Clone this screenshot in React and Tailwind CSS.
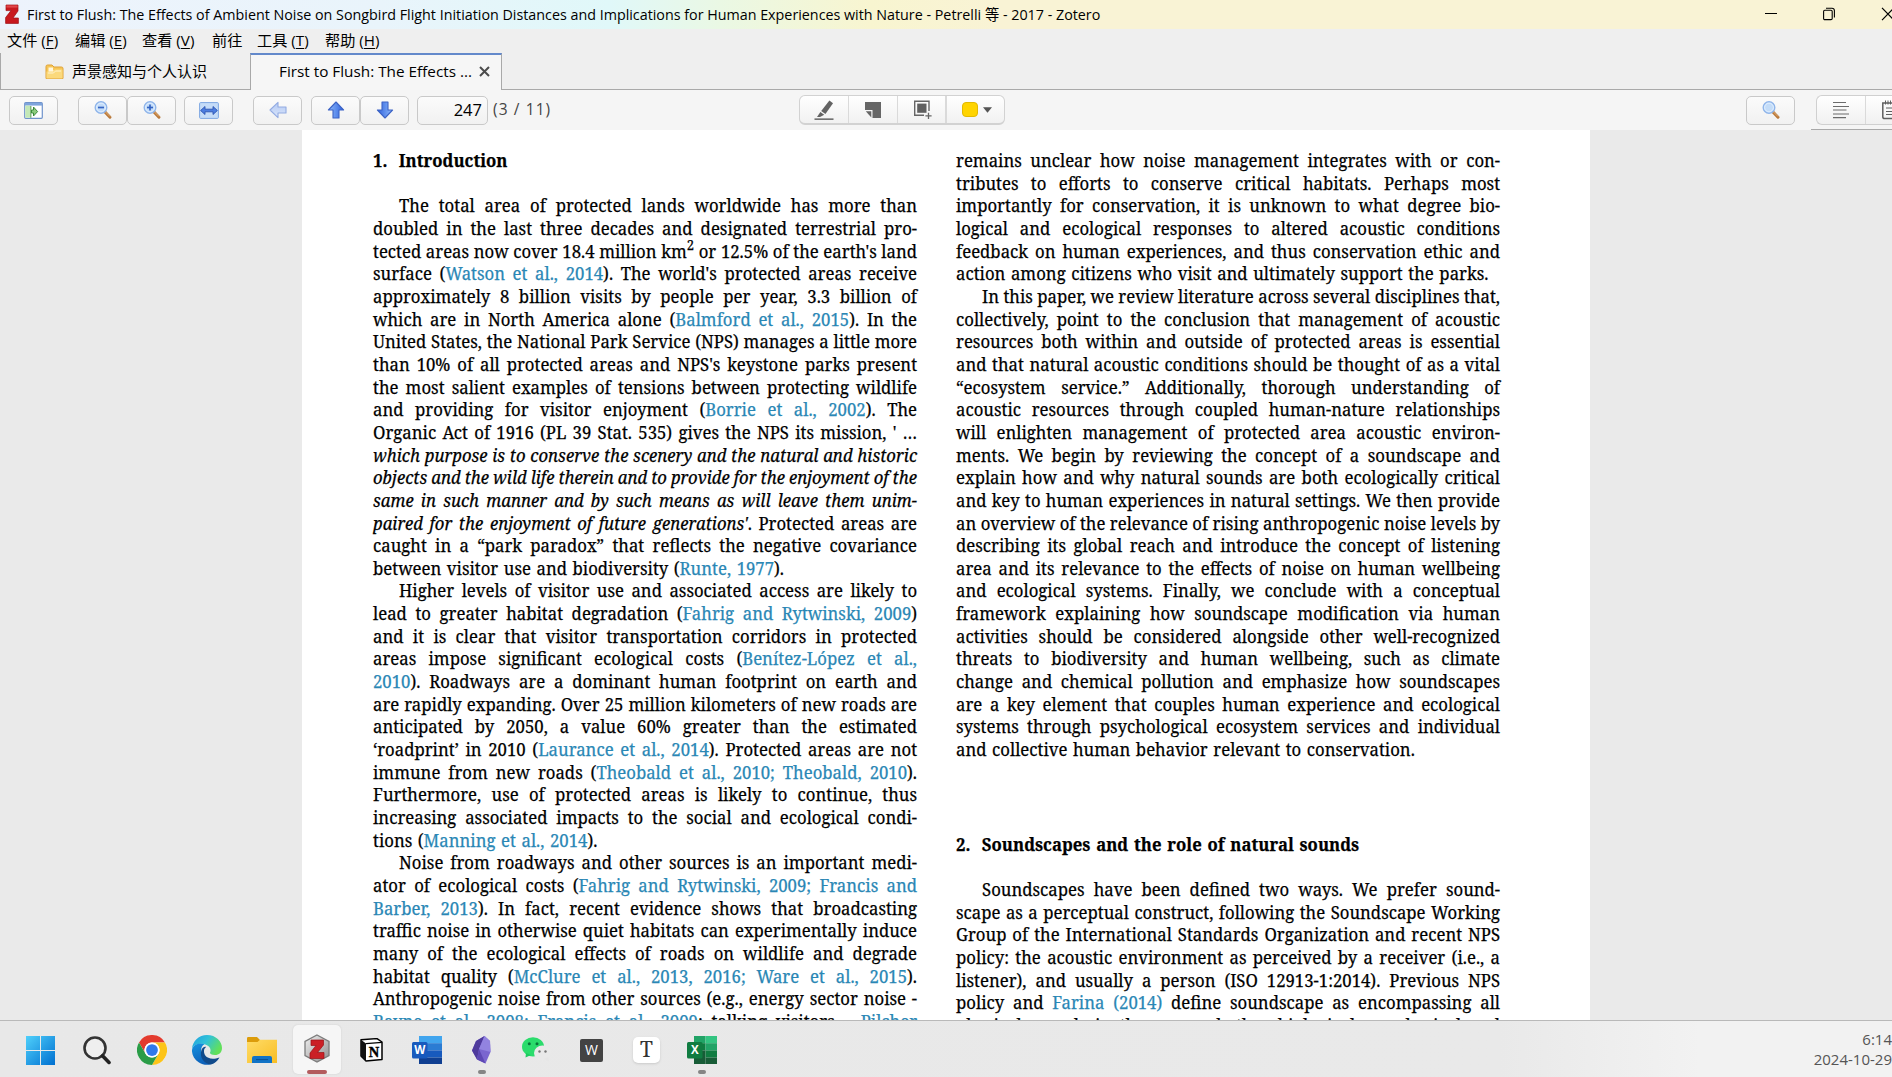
import React from "react";

/* Body copy: [[...]] marks a citation link, ^n a superscript. Flags: i indent, e end of paragraph, s italic, h heading, b blank */
const LEFT = [
  ["h", "1.  Introduction"],
  ["b", ""],
  ["i", "The total area of protected lands worldwide has more than"],
  ["", "doubled in the last three decades and designated terrestrial pro-"],
  ["", "tected areas now cover 18.4 million km^2 or 12.5% of the earth's land"],
  ["", "surface ([[Watson et al., 2014]]). The world's protected areas receive"],
  ["", "approximately 8 billion visits by people per year, 3.3 billion of"],
  ["", "which are in North America alone ([[Balmford et al., 2015]]). In the"],
  ["", "United States, the National Park Service (NPS) manages a little more"],
  ["", "than 10% of all protected areas and NPS's keystone parks present"],
  ["", "the most salient examples of tensions between protecting wildlife"],
  ["", "and providing for visitor enjoyment ([[Borrie et al., 2002]]). The"],
  ["", "Organic Act of 1916 (PL 39 Stat. 535) gives the NPS its mission, ' …"],
  ["s", "which purpose is to conserve the scenery and the natural and historic"],
  ["s", "objects and the wild life therein and to provide for the enjoyment of the"],
  ["s", "same in such manner and by such means as will leave them unim-"],
  ["", "__paired for the enjoyment of future generations'__. Protected areas are"],
  ["", "caught in a “park paradox” that reflects the negative covariance"],
  ["e", "between visitor use and biodiversity ([[Runte, 1977]])."],
  ["i", "Higher levels of visitor use and associated access are likely to"],
  ["", "lead to greater habitat degradation ([[Fahrig and Rytwinski, 2009]])"],
  ["", "and it is clear that visitor transportation corridors in protected"],
  ["", "areas impose significant ecological costs ([[Benítez-López et al.,]]"],
  ["", "[[2010]]). Roadways are a dominant human footprint on earth and"],
  ["", "are rapidly expanding. Over 25 million kilometers of new roads are"],
  ["", "anticipated by 2050, a value 60% greater than the estimated"],
  ["", "‘roadprint’ in 2010 ([[Laurance et al., 2014]]). Protected areas are not"],
  ["", "immune from new roads ([[Theobald et al., 2010; Theobald, 2010]])."],
  ["", "Furthermore, use of protected areas is likely to continue, thus"],
  ["", "increasing associated impacts to the social and ecological condi-"],
  ["e", "tions ([[Manning et al., 2014]])."],
  ["i", "Noise from roadways and other sources is an important medi-"],
  ["", "ator of ecological costs ([[Fahrig and Rytwinski, 2009; Francis and]]"],
  ["", "[[Barber, 2013]]). In fact, recent evidence shows that broadcasting"],
  ["", "traffic noise in otherwise quiet habitats can experimentally induce"],
  ["", "many of the ecological effects of roads on wildlife and degrade"],
  ["", "habitat quality ([[McClure et al., 2013, 2016; Ware et al., 2015]])."],
  ["", "Anthropogenic noise from other sources (e.g., energy sector noise -"],
  ["", "[[Bayne et al., 2008; Francis et al., 2009]]; talking visitors – [[Pilcher]]"],
];

const RIGHT_TOP = [
  ["", "remains unclear how noise management integrates with or con-"],
  ["", "tributes to efforts to conserve critical habitats. Perhaps most"],
  ["", "importantly for conservation, it is unknown to what degree bio-"],
  ["", "logical and ecological responses to altered acoustic conditions"],
  ["", "feedback on human experiences, and thus conservation ethic and"],
  ["e", "action among citizens who visit and ultimately support the parks."],
  ["i", "In this paper, we review literature across several disciplines that,"],
  ["", "collectively, point to the conclusion that management of acoustic"],
  ["", "resources both within and outside of protected areas is essential"],
  ["", "and that natural acoustic conditions should be thought of as a vital"],
  ["", "“ecosystem service.” Additionally, thorough understanding of"],
  ["", "acoustic resources through coupled human-nature relationships"],
  ["", "will enlighten management of protected area acoustic environ-"],
  ["", "ments. We begin by reviewing the concept of a soundscape and"],
  ["", "explain how and why natural sounds are both ecologically critical"],
  ["", "and key to human experiences in natural settings. We then provide"],
  ["", "an overview of the relevance of rising anthropogenic noise levels by"],
  ["", "describing its global reach and introduce the concept of listening"],
  ["", "area and its relevance to the effects of noise on human wellbeing"],
  ["", "and ecological systems. Finally, we conclude with a conceptual"],
  ["", "framework explaining how soundscape modification via human"],
  ["", "activities should be considered alongside other well-recognized"],
  ["", "threats to biodiversity and human wellbeing, such as climate"],
  ["", "change and chemical pollution and emphasize how soundscapes"],
  ["", "are a key element that couples human experience and ecological"],
  ["", "systems through psychological ecosystem services and individual"],
  ["e", "and collective human behavior relevant to conservation."],
];

const RIGHT_BOTTOM = [
  ["h", "2.  Soundscapes and the role of natural sounds"],
  ["b", ""],
  ["i", "Soundscapes have been defined two ways. We prefer sound-"],
  ["", "scape as a perceptual construct, following the Soundscape Working"],
  ["", "Group of the International Standards Organization and recent NPS"],
  ["", "policy: the acoustic environment as perceived by a receiver (i.e., a"],
  ["", "listener), and usually a person (ISO 12913-1:2014). Previous NPS"],
  ["", "policy and [[Farina (2014)]] define soundscape as encompassing all"],
  ["", "physical sounds in the area, whether biological, geophysical and"],
];

const KIND = {
  "": "[text-align-last:justify] [word-spacing:-1px]",
  i: "[text-align-last:justify] [word-spacing:-1px] pl-[28px]",
  e: "[word-spacing:1.3px]",
  s: "[text-align-last:justify] [word-spacing:-1px] italic",
  h: "font-bold whitespace-pre [word-spacing:1.5px]",
  b: "",
};

function Rich({ text }) {
  return text.split(/(\[\[.*?\]\]|\^\d|__.*?__)/).map((part, i) => {
    if (part.startsWith("[[")) return <span key={i} className="text-[#2a87b5]">{part.slice(2, -2)}</span>;
    if (part.startsWith("^")) return <span key={i} className="relative -top-[8px] text-[14px] leading-none">{part.slice(1)}</span>;
    if (part.startsWith("__")) return <em key={i}>{part.slice(2, -2)}</em>;
    return part;
  });
}

function Lines({ rows }) {
  return rows.map(([kind, text], i) => (
    <p key={i} className={`h-[22.67px] whitespace-nowrap ${KIND[kind]}`}><Rich text={text} /></p>
  ));
}

function Column({ children }) {
  return (
    <div className="w-[544px] shrink-0">
      <div className="w-[585px] origin-top-left scale-x-[0.93] font-['Noto_Serif','Liberation_Serif',serif] text-[18px] leading-[22.67px] text-black [-webkit-text-stroke:0.25px]">
        {children}
      </div>
    </div>
  );
}

const BTN = "flex h-[29px] shrink-0 items-center justify-center rounded-[5px] border border-[#c9c9c9] bg-gradient-to-b from-[#fbfbfb] to-[#f1f1f1]";

function Zoom({ sign }) {
  return (
    <svg width="20" height="20" viewBox="0 0 20 20">
      <path d="M12 12 L17 17.2" stroke="#b9783a" strokeWidth="3" strokeLinecap="round" />
      <path d="M12.5 12 L17 16.5" stroke="#e0b078" strokeWidth="1" />
      <circle cx="8" cy="7.5" r="5.8" fill="#c3dcf8" stroke="#8fb5ea" strokeWidth="1.4" />
      <circle cx="8" cy="7.5" r="4.4" fill="none" stroke="#eaf4ff" strokeWidth=".8" />
      {sign !== "none" && <path d="M5 7.5 H11" stroke="#3665c4" strokeWidth="1.7" />}
      {sign === "plus" && <path d="M8 4.5 V10.5" stroke="#3665c4" strokeWidth="1.7" />}
    </svg>
  );
}

function Arrow({ className, pale }) {
  return (
    <svg width="20" height="20" viewBox="0 0 20 20" className={className}>
      <defs>
        <linearGradient id={pale ? "ap" : "ad"} x1="0" x2="1">
          <stop offset="0" stopColor={pale ? "#dbe6fb" : "#8db9fb"} />
          <stop offset="1" stopColor={pale ? "#b3c9f4" : "#2f62dd"} />
        </linearGradient>
      </defs>
      <path d="M10 2 L17.6 10 H13 V18 H7 V10 H2.4 Z" fill={pale ? "url(#ap)" : "url(#ad)"} stroke={pale ? "#93abe2" : "#3c63c5"} strokeWidth="1.1" strokeLinejoin="round" />
    </svg>
  );
}

function TitleBar() {
  return (
    <header className="flex h-[29px] shrink-0 items-center bg-[linear-gradient(90deg,#edf3fc_0,#e9f4fb_380px,#e0f8f9_610px,#eaf8e4_720px,#f8f5d0_870px,#f9f3d5_1000px)] text-[14.31px] text-black">
      <svg width="14" height="20" viewBox="0 0 14 20" className="-mt-[2px] ml-[5px] shrink-0">
        <path d="M1 1 H13 V7 L8 14 H13.4 V19.4 H.6 V13.6 L6 6.6 H1 Z" fill="#c8191f" stroke="#9d1015" strokeWidth=".7" />
        <path d="M1.4 1.4 H12.6 V3.6 H1.4 Z" fill="#e0474a" />
      </svg>
      <span className="ml-[8px] whitespace-nowrap">First to Flush: The Effects of Ambient Noise on Songbird Flight Initiation Distances and Implications for Human Experiences with Nature - Petrelli 等 - 2017 - Zotero</span>
      <div className="-mr-[3px] -mt-px ml-auto flex shrink-0 items-center gap-[46px]">
        <svg width="12" height="14" viewBox="0 0 12 14"><path d="M0 6.5 H12" stroke="#000" /></svg>
        <svg width="12" height="14" viewBox="0 0 12 14" fill="none" stroke="#000" strokeWidth="1.1">
          <rect x=".6" y="3.2" width="8.6" height="9.4" rx="1.2" />
          <path d="M3 1.2 H9 Q11.4 1.2 11.4 3.6 V10.6" />
        </svg>
        <svg width="14" height="14" viewBox="0 0 14 14"><path d="M1 .8 L13 13.200 M13 .8 L1 13.200" stroke="#000" strokeWidth="1.2" /></svg>
      </div>
    </header>
  );
}

const MENU = [["文件", "F", "w-[68px]"], ["编辑", "E", "w-[67px]"], ["查看", "V", "w-[70px]"], ["前往", "", "w-[45px]"], ["工具", "T", "w-[68px]"], ["帮助", "H", "w-[68px]"]];

function MenuBar() {
  return (
    <nav className="flex h-[24px] shrink-0 items-center bg-[#efefef] pb-[2px] pl-[7px] text-[15.2px] text-black">
      {MENU.map(([label, key, w]) => (
        <span key={label} className={`shrink-0 whitespace-nowrap ${w}`}>
          {label}{key && <> (<u className="underline-offset-2">{key}</u>)</>}
        </span>
      ))}
    </nav>
  );
}

function Tabs() {
  return (
    <div className="flex h-[37px] shrink-0 bg-[#efefef] text-black">
      <div className="flex w-[250px] items-center border-b border-l border-[#a9a9a9] pl-[44px] text-[15px]">
        <svg width="19" height="16" viewBox="0 0 19 16" className="mr-[8px] mt-px">
          <path d="M1 14.5 V2.5 Q1 1 2.5 1 H7 L9 3 H16.5 Q18 3 18 4.5 V14.5 Z" fill="#f6c657" stroke="#dfa136" />
          <path d="M3.5 3.5 H8 V6.5 H16 V9 H3.5 Z" fill="#fff7df" />
          <path d="M1.5 7.5 H8 L10 5.5 H17.5 V14.5 H1.5 Z" fill="#fbd97c" />
          <path d="M3 9 H8.5 L10.5 7 H16" stroke="#fff3cf" fill="none" />
        </svg>
        声景感知与个人认识
      </div>
      <div className="flex w-[252px] items-center border-x border-t-2 border-x-[#a9a9a9] border-t-[#6389cb] bg-[#f6f6f6] pb-[2px] pl-[28px] text-[15.3px]">
        <span className="whitespace-nowrap">First to Flush: The Effects ...</span>
        <svg width="11" height="11" viewBox="0 0 11 11" className="ml-[7px] shrink-0"><path d="M1 1 L10 10 M10 1 L1 10" stroke="#4c4c4c" strokeWidth="2" /></svg>
      </div>
      <div className="flex-1 border-b border-[#a9a9a9]" />
    </div>
  );
}

function Toolbar() {
  return (
    <div className="flex h-[40px] shrink-0 items-center overflow-hidden bg-[#f5f5f5]">
      <div className={`${BTN} ml-[9px] w-[49px]`}>
        <svg width="19" height="17" viewBox="0 0 19 17">
          <rect x=".7" y=".7" width="17.6" height="15.6" rx="1" fill="#fff" stroke="#6f93cb" strokeWidth="1.2" />
          <path d="M1 1 H18 V3.6 H1 Z" fill="#7ea4dc" />
          <path d="M1.3 3.6 H6 V15.7 H1.3 Z" fill="#c3e8b6" />
          <path d="M6.8 4 V15.7" stroke="#5aa151" strokeWidth="1.1" />
          <path d="M7.5 8 H9.5 V5 L13.6 9.6 L9.5 14 V11 H7.5 Z" fill="#8ccb7c" stroke="#3c8c3c" />
        </svg>
      </div>
      <div className={`${BTN} ml-[20px] w-[49px]`}><Zoom sign="minus" /></div>
      <div className={`${BTN} w-[49px]`}><Zoom sign="plus" /></div>
      <div className={`${BTN} ml-[8px] w-[49px]`}>
        <svg width="20" height="17" viewBox="0 0 20 17">
          <rect x=".6" y=".6" width="18.8" height="15.8" rx="1" fill="#c5dcf8" stroke="#7ea7e2" />
          <path d="M1.6 8.500 L6 4.500 V7.200 H14 V4.500 L18.4 8.500 L14 12.500 V9.800 H6 V12.500 Z" fill="#4c7de0" stroke="#2d55b2" strokeWidth=".9" />
        </svg>
      </div>
      <div className={`${BTN} ml-[20px] w-[49px]`}><Arrow pale className="-rotate-90" /></div>
      <div className={`${BTN} ml-[9px] w-[49px]`}><Arrow /></div>
      <div className={`${BTN} w-[49px]`}><Arrow className="rotate-180" /></div>
      <div className={`${BTN} ml-[8px] w-[71px] !justify-end pr-[5px] text-[16.5px] text-black`}>247</div>
      <span className="ml-[5px] w-[60px] shrink-0 whitespace-nowrap text-[15.5px] tracking-[1.1px] text-[#444]">(3 / 11)</span>

      <div className="ml-[246px] flex h-[30px] w-[206px] shrink-0 items-center rounded-[6px] border border-b-2 border-[#d2d2d2] bg-gradient-to-b from-white to-[#f1f1f1]">
        <div className="flex h-full w-[49px] items-center justify-center border-r border-[#dadada]">
          <svg width="20" height="20" viewBox="0 0 20 20" fill="#636363">
            <path d="M15.4 .6 L19 3.2 L11.4 14 L7.2 11 Z" />
            <path d="M6.4 12 L10.2 14.8 L6 17 L3 17 Z" />
            <path d="M.5 18.4 H19.5 V19.9 H.5 Z" />
          </svg>
        </div>
        <div className="flex h-full w-[49px] items-center justify-center border-r border-[#dadada]">
          <svg width="16" height="16" viewBox="0 0 16 16" fill="#666"><path d="M0 0 H16 V16 H7.5 V8 H0 Z" /><path d="M.8 9.2 H6.3 V15.4 Z" /></svg>
        </div>
        <div className="flex h-full w-[49px] items-center justify-center border-r-2 border-[#dadada]">
          <svg width="19" height="19" viewBox="0 0 19 19" fill="none" stroke="#666" className="ml-[2px]">
            <path d="M11 15.2 H1.7 V1.2 H16 V11" strokeWidth="1.4" /><rect x="4.2" y="3.6" width="9.3" height="9.2" fill="#606060" stroke="none" />
            <path d="M12.4 15.8 H18.6 M15.5 12.7 V18.9" strokeWidth="1.3" />
          </svg>
        </div>
        <div className="flex flex-1 items-center gap-[5px] pl-[15px]">
          <span className="h-[15px] w-[16px] rounded-[4px] border border-[#e3b900] bg-[#ffd400]" />
          <svg width="9" height="6" viewBox="0 0 9 6"><path d="M0 .3 H9 L4.5 5.7 Z" fill="#555" /></svg>
        </div>
      </div>

      <div className={`${BTN} ml-auto w-[49px]`}><Zoom sign="none" /></div>
      <div className="ml-[16px] flex h-[40px] w-[81px] shrink-0 items-center border-b border-[#a9a9a9] pl-[5px] pt-px">
        <div className="flex h-[30px] w-[76px] items-center rounded-l-[6px] border border-r-0 border-[#d0d0d0] bg-gradient-to-b from-white to-[#f1f1f1]">
          <div className="flex h-full w-[49px] items-center justify-center border-r border-[#dadada]">
            <svg width="16" height="18" viewBox="0 0 16 18" stroke="#6b6b6b" strokeWidth="1.2"><path d="M0 1.5 H13 M0 5.5 H16 M0 9 H13.5 M0 13 H16 M0 16.6 H13" /></svg>
          </div>
          <svg width="10" height="20" viewBox="0 0 10 20" className="ml-auto" fill="none" stroke="#5f5f5f">
            <path d="M10 18.5 H2.5 Q.8 18.5 .8 17 V3 H10" strokeWidth="1.5" />
            <path d="M3.5 .5 V4.5 M6 .5 V4.5 M8.5 .5 V4.5 M4 8 H10 M4 11.5 H10 M4 14.5 H10" />
          </svg>
        </div>
      </div>
    </div>
  );
}

function OfficeIcon({ letter, c }) {
  return (
    <svg width="30" height="29" viewBox="0 0 30 29">
      <path d="M7 0 H30 V7.2 H7 Z" fill={c[0]} /><path d="M7 7.2 H30 V14.4 H7 Z" fill={c[1]} />
      <path d="M7 14.4 H30 V21.6 H7 Z" fill={c[2]} /><path d="M7 21.6 H30 V28 H7 Z" fill={c[3]} />
      <rect x="0" y="6" width="15.5" height="16.5" rx="1.5" fill={c[4]} />
      <text x="7.8" y="18.4" textAnchor="middle" fontSize="11.5" fontWeight="700" fill="#fff">{letter}</text>
    </svg>
  );
}

const EXCEL = (
  <svg width="30" height="29" viewBox="0 0 30 29">
    <path d="M7 0 H18.500 V7.200 H7 Z" fill="#21a366" /><path d="M18.500 0 H30 V7.200 H18.500 Z" fill="#33c481" />
    <path d="M7 7.200 H18.500 V14.400 H7 Z" fill="#107c41" /><path d="M18.500 7.200 H30 V14.400 H18.500 Z" fill="#21a366" />
    <path d="M7 14.400 H18.500 V28 H7 Z" fill="#185c37" /><path d="M18.500 14.400 H30 V21.600 H18.500 Z" fill="#107c41" />
    <path d="M18.500 21.600 H30 V28 H18.500 Z" fill="#185c37" />
    <rect x="0" y="6" width="15.5" height="16.5" rx="1.5" fill="#107c41" />
    <text x="7.800" y="18.400" textAnchor="middle" fontSize="11.500" fontWeight="700" fill="#fff">X</text>
  </svg>
);

const ICONS = [
  {
    el: (
      <svg width="29" height="29" viewBox="0 0 29 29">
        <defs><linearGradient id="win" x2="1" y2="1"><stop stopColor="#4fd0fb" /><stop offset="1" stopColor="#006fd0" /></linearGradient></defs>
        <path d="M0 0 H14 V14 H0 Z M15 0 H29 V14 H15 Z M0 15 H14 V29 H0 Z M15 15 H29 V29 H15 Z" fill="url(#win)" />
      </svg>
    ),
  },
  { el: <svg width="28" height="29" viewBox="0 0 28 29" fill="none"><circle cx="12" cy="12" r="10.5" fill="#efefef" stroke="#333" strokeWidth="2.6" /><path d="M19.5 19.8 L26 26.4" stroke="#222" strokeWidth="3.6" strokeLinecap="round" /></svg> },
  {
    el: (
      <svg width="30" height="30" viewBox="0 0 48 48">
        <circle cx="24" cy="24" r="24" fill="#fff" />
        <path d="M3.2 12 A24 24 0 0 1 44.8 12 H24 A12 12 0 0 0 13.6 30 Z" fill="#e33b2e" />
        <path d="M44.8 12 A24 24 0 0 1 24 48 L34.4 30 A12 12 0 0 0 24 12 Z" fill="#fcc419" />
        <path d="M24 48 A24 24 0 0 1 3.2 12 L13.6 30 A12 12 0 0 0 34.4 30 Z" fill="#2a9c47" />
        <circle cx="24" cy="24" r="12" fill="#fff" /><circle cx="24" cy="24" r="9.4" fill="#3079ec" />
      </svg>
    ),
  },
  {
    el: (
      <svg width="30" height="30" viewBox="0 0 30 30">
        <defs>
          <linearGradient id="eg" x1="0" x2="1" y2=".5"><stop stopColor="#1f9ee0" /><stop offset=".5" stopColor="#31c2d8" /><stop offset="1" stopColor="#62e05a" /></linearGradient>
          <linearGradient id="eb" x2=".4" y2="1"><stop stopColor="#1593e0" /><stop offset="1" stopColor="#0d5fb8" /></linearGradient>
        </defs>
        <path d="M0 14 C.5 6 7 0 15 0 C24 0 30 6.5 30 13 C30 17.5 27 20 23 20 C19.5 20 17.8 18.7 18 17.5 C19.4 15.5 18.3 11.5 14.5 10 C9 7.5 2 9 0 14 Z" fill="url(#eg)" />
        <path d="M0 15 C1 9.5 7 7 12.5 9.2 C9.5 10.5 8.8 14 9.3 17 C10.3 24 17 28 23 27 C19 30.5 12 30.8 7 27.5 C2 24.5 -.3 19.5 0 15 Z" fill="url(#eb)" />
        <path d="M12.3 14 C10.5 20 16 26.5 27.5 22.5 C25.5 26 22.5 28.4 19 29.4 C12 29 7 22 9.5 15 C10.5 12 13 11.5 14 12 Z" fill="#114a8b" />
      </svg>
    ),
  },
  {
    el: (
      <svg width="30" height="27" viewBox="0 0 30 27">
        <defs><linearGradient id="fe" y2="1"><stop stopColor="#ffdc68" /><stop offset="1" stopColor="#f8bd23" /></linearGradient></defs>
        <path d="M0 1.2 Q0 0 1.2 0 H10 L13 3 V7 H0 Z" fill="#dc9c0b" /><path d="M0 5 H10.5 L13 2.8 H30 V26 H0 Z" fill="url(#fe)" />
        <path d="M5 26 V21 Q5 19 7 19 H23 Q25 19 25 21 V26 Z" fill="#1173c6" /><path d="M9 22.6 H21" stroke="#084f93" />
      </svg>
    ),
  },
  {
    active: true, dot: "w-[20px] bg-[#b35c5e]",
    el: (
      <svg width="26" height="29" viewBox="0 0 26 29" className="-mt-[3px]">
        <defs><linearGradient id="zb" y2="1"><stop stopColor="#f1f1f1" /><stop offset="1" stopColor="#8f8f8f" /></linearGradient></defs>
        <path d="M13 1 L25 7.5 V21.5 L13 28 L1 21.5 V7.5 Z" fill="url(#zb)" stroke="#7c7c7c" strokeWidth="1.3" />
        <path d="M7 6 H19.5 V11 L13.5 18.5 H20 V24.5 H6 V19 L12 11.5 H7 Z" fill="#cb2026" stroke="#991317" strokeWidth=".7" />
      </svg>
    ),
  },
  {
    el: (
      <svg width="23" height="24" viewBox="0 0 23 24">
        <path d="M1 1.8 L17 .6 L22 4 V21.5 L6 23 L1 18 Z" fill="#fff" stroke="#000" strokeWidth="1.5" strokeLinejoin="round" />
        <path d="M1 1.8 L6 5.6 V23 L1 18 Z" fill="#111" /><path d="M6 5.6 L22 4.4" stroke="#000" strokeWidth="1.4" />
        <text x="14" y="18.8" textAnchor="middle" fontSize="14.5" fontWeight="700" stroke="#000" strokeWidth=".4" className="font-['Liberation_Serif',serif]">N</text>
      </svg>
    ),
  },
  { el: <OfficeIcon letter="W" c={["#41a5ee", "#2b7cd3", "#185abd", "#103f91", "#185abd"]} /> },
  {
    dot: "w-[8px] bg-[#858585]",
    el: (
      <svg width="19" height="28" viewBox="0 0 19 28">
        <path d="M12.5 0 L18 5 L18.5 16 L13.5 27.5 L5 23.5 L0 14.5 L4 5 Z" fill="#7a66cf" />
        <path d="M12.5 0 L4 5 L0 14.5 L5 23.5 L7 13 Z" fill="#4e3a9c" /><path d="M12.5 0 L18 5 L18.5 16 L7 13 Z" fill="#9283e0" />
        <path d="M5 23.5 L7 13 L13.5 27.5 Z" fill="#5e49b4" />
      </svg>
    ),
  },
  {
    el: (
      <svg width="29" height="26" viewBox="0 0 29 26">
        <ellipse cx="11" cy="9.8" rx="11" ry="9.6" fill="#2bdc6c" /><path d="M4 16 L3.5 20.5 L9 18 Z" fill="#1ecb60" />
        <ellipse cx="20.5" cy="16" rx="8.5" ry="7.4" fill="#e9e9e9" /><path d="M22 22 L27 24.5 L26 20 Z" fill="#e6e6e6" />
        <circle cx="7.3" cy="6.8" r="1.5" fill="#08763a" /><circle cx="15" cy="6.8" r="1.5" fill="#08763a" />
        <circle cx="17.5" cy="14.5" r="1.2" fill="#777" /><circle cx="23.5" cy="14.5" r="1.2" fill="#777" />
      </svg>
    ),
  },
  { el: <div className="flex h-[23px] w-[23px] items-center justify-center rounded-[2px] bg-[#434343] text-[14px] leading-none text-white">W</div> },
  { el: <div className="flex h-[26px] w-[27px] items-center justify-center rounded-[5px] bg-white pb-px font-['Noto_Serif','Liberation_Serif',serif] text-[21px] leading-none text-[#333] shadow-sm">T</div> },
  { dot: "w-[8px] bg-[#858585]", el: EXCEL },
];

function Taskbar() {
  return (
    <footer className="flex h-[57px] shrink-0 items-center border-t border-[#b9b9b9] bg-[linear-gradient(90deg,#e8e8e8_0,#e9e9e9_1500px,#f2f2f2_1700px)] pl-[13px]">
      {ICONS.map(({ el, active, dot }, i) => (
        <div key={i} className={`flex w-[55px] shrink-0 justify-center ${i ? "pl-[2px]" : ""}`}>
          <div className={`relative flex h-[49px] w-[48px] items-center justify-center rounded-[5px] pt-[2px] ${active ? "bg-[#f6f6f6] shadow-[0_0_2px_#ccc]" : ""}`}>
            {el}
            {dot && <span className={`absolute bottom-0 h-[4px] rounded-full ${dot}`} />}
          </div>
        </div>
      ))}
      <div className="ml-auto text-right text-[15px] leading-[20px] text-[#555]">
        <div>6:14</div>
        <div>2024-10-29</div>
      </div>
    </footer>
  );
}

export default function App() {
  return (
    <div className="flex h-[1077px] w-[1892px] flex-col overflow-hidden bg-[#eaeaea] font-['Open_Sans','Noto_Sans_CJK_SC',sans-serif]">
      <TitleBar />
      <MenuBar />
      <Tabs />
      <Toolbar />
      <main className="flex min-h-0 flex-1 overflow-hidden bg-[#eaeaea] pl-[302px]">
        <article className="flex w-[1288px] shrink-0 gap-[39px] overflow-hidden bg-white pl-[71px] pt-[19px]">
          <Column><Lines rows={LEFT} /></Column>
          <Column>
            <Lines rows={RIGHT_TOP} />
            <div className="mt-[72px]"><Lines rows={RIGHT_BOTTOM} /></div>
          </Column>
        </article>
      </main>
      <Taskbar />
    </div>
  );
}
